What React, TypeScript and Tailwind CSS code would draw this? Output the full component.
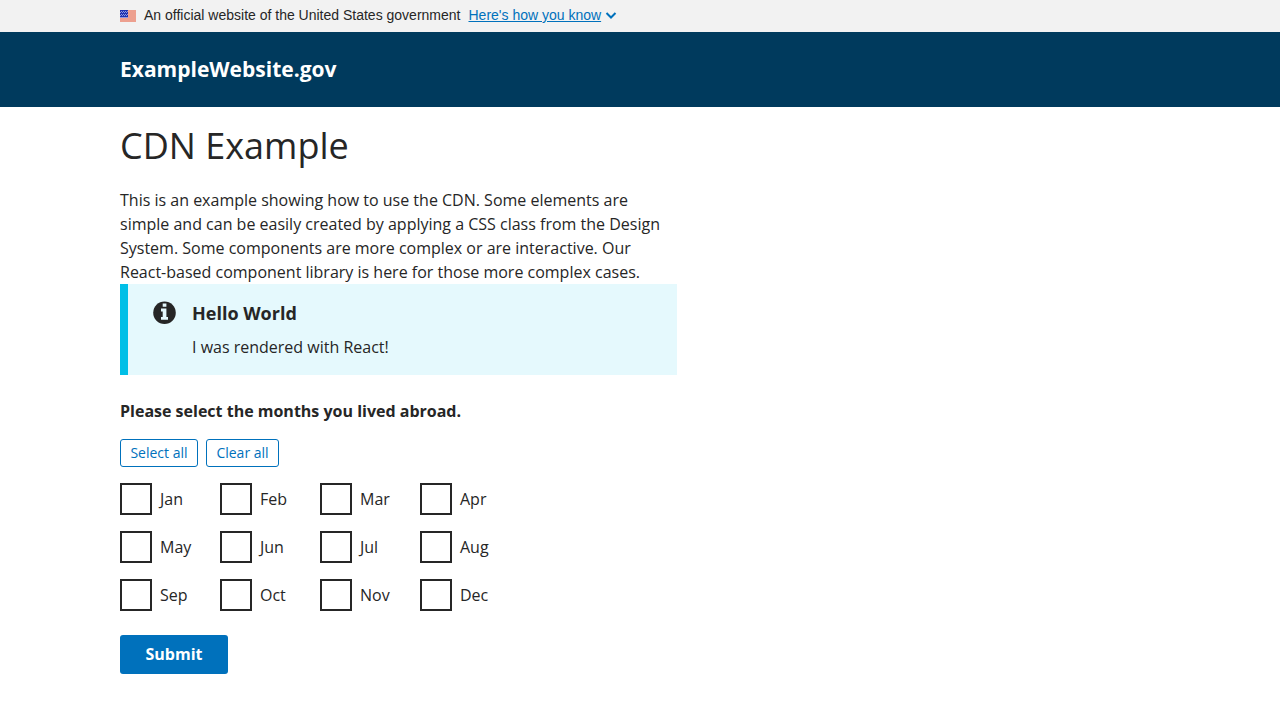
const months = ["Jan", "Feb", "Mar", "Apr", "May", "Jun", "Jul", "Aug", "Sep", "Oct", "Nov", "Dec"];

function Flag() {
  return (
    <svg width="16" height="14" viewBox="0 0 16 14" aria-hidden="true">
      <rect y="2" width="16" height="12" fill="#eda08f" />
      <rect y="2" width="8" height="8" fill="#8f99e0" />
      <rect y="2" width="8" height="7" fill="#1e33b1" />
      <path
        d="M1 3h1v1H1zM3 3h1v1H3zM5 3h1v1H5zM7 3h1v1H7zM0 4h1v1H0zM2 4h1v1H2zM4 4h1v1H4zM6 4h1v1H6zM1 6h1v1H1zM3 6h1v1H3zM5 6h1v1H5zM7 6h1v1H7zM0 7h1v1H0zM2 7h1v1H2zM4 7h1v1H4zM6 7h1v1H6z"
        fill="#8f99e0"
      />
    </svg>
  );
}

export default function App() {
  return (
    <div className="font-['Open_Sans',sans-serif] text-base leading-6 text-[#262626]">
      <section aria-label="Official government website" className="bg-[#f2f2f2]">
        <div className="mx-auto flex max-w-[1040px] items-center pt-[5px] pb-[7px] font-['Liberation_Sans',sans-serif] text-sm leading-5">
          <Flag />
          <span className="ml-2">An official website of the United States government</span>
          <button type="button" className="ml-2 flex items-center gap-1 text-[#0071bc]">
            <span className="underline">Here's how you know</span>
            <svg width="12" height="12" viewBox="0 0 12 12" fill="none" stroke="currentColor" strokeWidth="2" aria-hidden="true">
              <path d="M1.5 4 6 8.5 10.5 4" />
            </svg>
          </button>
        </div>
      </section>
      <header className="bg-[#003a5d]">
        <div className="mx-auto max-w-[1040px] py-[23px] text-[21px] leading-[29px] font-bold text-white">
          <a href="#">ExampleWebsite.gov</a>
        </div>
      </header>
      <main className="mx-auto max-w-[1040px] pt-4">
        <h1 className="text-4xl leading-[45px]">CDN Example</h1>
        <p className="mt-5 max-w-[557px]">
          This is an example showing how to use the CDN. Some elements are simple and can be easily created by applying a CSS class from the Design System. Some components are more complex or are interactive. Our React-based component library is here for those more complex cases.
        </p>
        <div role="status" className="flex max-w-[557px] gap-4 border-l-8 border-[#00bfe7] bg-[#e5f9fd] px-6 py-4">
          <svg className="size-6" viewBox="0 0 24 24" aria-hidden="true">
            <circle cx="12.5" cy="12.7" r="11.3" fill="#262626" />
            <path d="M10.7 3.6h3.7v3.2h-3.7zM9 8.6h5.4v8.3H16v2.9H9v-2.9h1.7v-5.4H9z" fill="#e5f9fd" />
          </svg>
          <div>
            <h2 className="text-lg leading-[27px] font-bold">Hello World</h2>
            <p className="mt-2">I was rendered with React!</p>
          </div>
        </div>
        <form className="mt-6" onSubmit={(e) => e.preventDefault()}>
          <fieldset>
            <legend className="font-bold">Please select the months you lived abroad.</legend>
            <div className="mt-4 flex gap-2 text-sm">
              <button type="button" className="h-7 min-w-[78px] rounded-[3px] border border-[#0071bc] px-2 text-[#0071bc]">Select all</button>
              <button type="button" className="h-7 min-w-[73px] rounded-[3px] border border-[#0071bc] px-2 text-[#0071bc]">Clear all</button>
            </div>
            <div className="mt-4 grid max-w-[400px] grid-cols-4 gap-y-4">
              {months.map((m) => (
                <label key={m} className="flex items-center gap-2">
                  <input type="checkbox" name="months" value={m} className="size-8 appearance-none border-2 border-[#262626] bg-white checked:bg-[#0071bc]" />
                  {m}
                </label>
              ))}
            </div>
          </fieldset>
          <button type="submit" className="mt-6 min-w-[108px] rounded-[3px] bg-[#0071bc] px-6 pt-[7px] pb-2 font-bold text-white">Submit</button>
        </form>
      </main>
    </div>
  );
}
